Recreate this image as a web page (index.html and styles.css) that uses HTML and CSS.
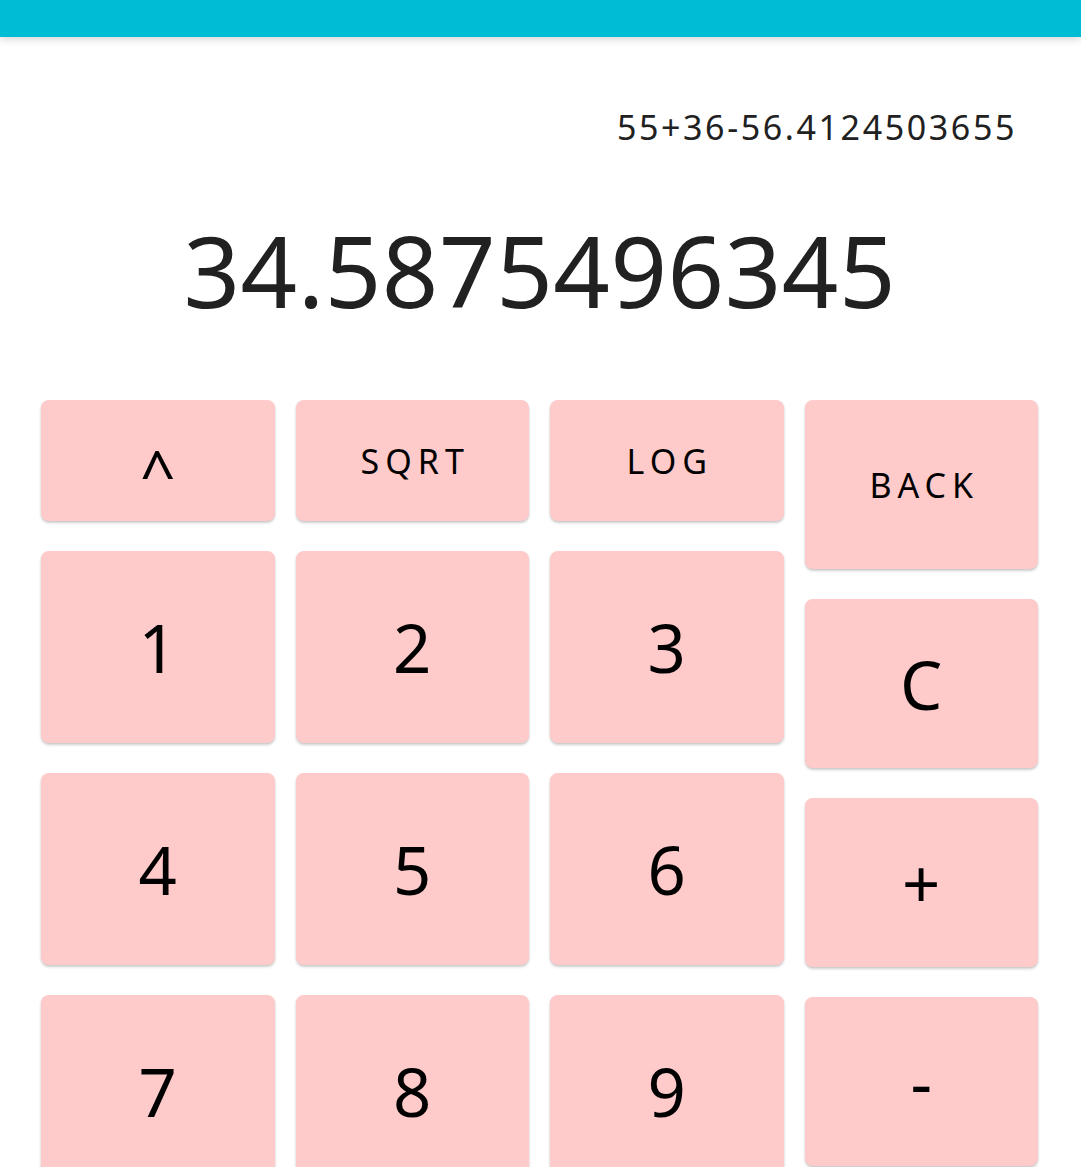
FILE: index.html
```html
<!DOCTYPE html>
<html lang="en">
<head>
<meta charset="utf-8">
<title>Calculator</title>
<link rel="stylesheet" href="styles.css">
</head>
<body>
<div class="app">
  <header class="appbar"></header>
  <main class="screen">
    <div class="expression">55+36-56.4124503655</div>
    <div class="result">34.5875496345</div>
    <div class="keypad">
      <div class="keys">
        <button class="key key-fn"><span class="caret">^</span></button>
        <button class="key key-fn">SQRT</button>
        <button class="key key-fn">LOG</button>
        <button class="key key-num">1</button>
        <button class="key key-num">2</button>
        <button class="key key-num">3</button>
        <button class="key key-num">4</button>
        <button class="key key-num">5</button>
        <button class="key key-num">6</button>
        <button class="key key-num">7</button>
        <button class="key key-num">8</button>
        <button class="key key-num">9</button>
      </div>
      <div class="ops">
        <button class="key key-op key-fn">BACK</button>
        <button class="key key-op key-num">C</button>
        <button class="key key-op key-num key-plus">+</button>
        <button class="key key-op key-num key-minus">-</button>
      </div>
    </div>
  </main>
</div>
</body>
</html>
```

FILE: styles.css
```css
html, body {
  margin: 0;
  padding: 0;
  overflow: hidden;
  background: #ffffff;
}

body {
  font-family: "Noto Sans", "DejaVu Sans", sans-serif;
  color: #212121;
}

.app {
  display: flex;
  flex-direction: column;
}

.appbar {
  height: 37px;
  background: #00bcd4;
  box-shadow: 0 2px 8px rgba(0, 0, 0, 0.18);
  position: relative;
  z-index: 1;
}

.screen {
  display: flex;
  flex-direction: column;
  padding: 0 43px 0 41px;
}

.expression {
  margin-top: 70px;
  height: 40px;
  line-height: 40px;
  font-size: 34px;
  letter-spacing: 2.6px;
  text-align: right;
  padding-right: 21px;
  color: #212121;
  white-space: nowrap;
}

.result {
  margin-top: 73px;
  height: 100px;
  line-height: 100px;
  font-size: 99px;
  letter-spacing: 0.5px;
  text-indent: 0.5px;
  text-align: center;
  color: #212121;
  white-space: nowrap;
}

.keypad {
  margin-top: 80px;
  display: flex;
  gap: 21px;
  align-items: flex-start;
}

.keys {
  flex: 1 1 auto;
  display: grid;
  grid-template-columns: repeat(3, 1fr);
  grid-template-rows: 121px 192px 192px 192px;
  column-gap: 21px;
  row-gap: 30px;
}

.ops {
  flex: 0 0 233.5px;
  display: flex;
  flex-direction: column;
  gap: 30px;
}

.key {
  border: none;
  margin: 0;
  padding: 0;
  background: #ffcaca;
  border-radius: 8px;
  box-shadow: 0 2px 3px rgba(0, 0, 0, 0.17), 0 1px 2px rgba(0, 0, 0, 0.08);
  display: flex;
  align-items: center;
  justify-content: center;
  color: #000000;
  font-family: "Noto Sans", "DejaVu Sans", sans-serif;
  font-weight: 400;
  cursor: pointer;
}

.key-op {
  height: 169px;
}

.key-fn {
  font-size: 34px;
  letter-spacing: 6px;
  text-indent: 6px;
}

.key-num {
  font-size: 67px;
  letter-spacing: 0;
  text-indent: 0;
}

.caret {
  display: inline-block;
  font-size: 62px;
  letter-spacing: 0;
  transform: translateY(11px);
  margin-left: -6px;
}
```
